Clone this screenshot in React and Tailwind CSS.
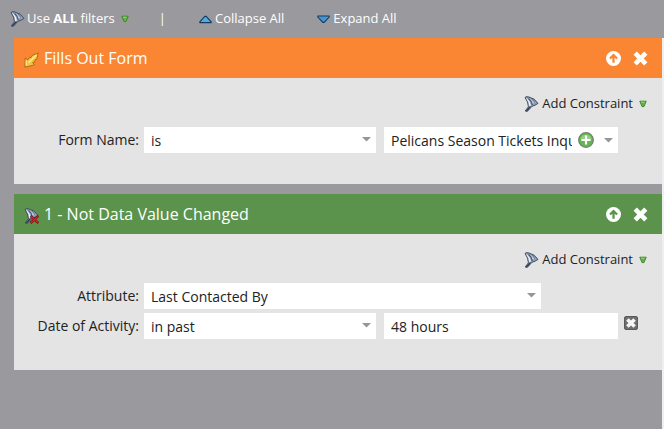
import { useState } from "react";

function FunnelIcon({ removed }) {
  return (
    <svg width="15" height="16" viewBox="0 0 15 16" className="shrink-0" aria-hidden="true">
      <path d="M1 1.6 Q1.8 0.2 4.4 0.8 Q11 2.2 14 7.4 Q11.4 9.4 7.8 10.4 L3.4 15.4 L1.2 15 L4.4 10.8 Q4.4 6 1 1.6 Z" fill="#8b9ab2" stroke="#3a465c" strokeWidth="0.9" strokeLinejoin="round" />
      <path d="M4.2 2 Q9.6 3.4 12.4 7.2 Q10 7.8 8.6 7.4 Q7.2 4.2 4.2 2 Z" fill="#b9c7d9" />
      <path d="M2.6 2.4 Q5.8 5 6.6 9.2 L5.6 10.6 Q5.6 6 2.6 2.4 Z" fill="#f6f9fc" stroke="#f6f9fc" strokeWidth="0.6" />
      <path d="M4.6 2.4 Q7.8 5 8.2 9" fill="none" stroke="#44536d" strokeWidth="1.1" />
      <path d="M7.4 2.8 Q10.4 4.8 11.2 7.6" fill="none" stroke="#52627d" strokeWidth="0.8" />
      <path d="M2.4 14.8 Q5 12.4 6.4 10.4" fill="none" stroke="#2c3546" strokeWidth="1.1" />
      {removed && (
        <>
          <path d="M6.6 8 L14.4 15 M14.4 8 L6.6 15" stroke="#7c1010" strokeWidth="2.4" />
          <path d="M7 8.4 L14 14.6 M14 8.4 L7 14.6" stroke="#d92828" strokeWidth="1.2" />
        </>
      )}
    </svg>
  );
}

function FormArrowIcon() {
  return (
    <svg width="15" height="16" viewBox="0 0 15 16" className="shrink-0" aria-hidden="true">
      <path d="M14.2 1 L13 6.8 L11 7.8 L11 9.4 L8.6 10.6 L10.6 12.8 L1 15.2 L1.2 6 L3.8 8 L5.4 5.4 L7 5.6 L8.2 3.4 Z" fill="#f6c340" stroke="#a8690f" strokeWidth="0.9" strokeLinejoin="round" />
      <path d="M12.4 3 L4.6 10.6 M2.2 8.4 L2.2 13.6" fill="none" stroke="#fff0a0" strokeWidth="1.1" />
    </svg>
  );
}

function GreenArrow() {
  return (
    <svg width="8" height="8" viewBox="0 0 8 8" className="shrink-0" aria-hidden="true">
      <path d="M0.8 1.2 H7.2 L5 6.6 H3 Z" fill="#62b345" stroke="#3a8228" strokeWidth="0.9" strokeLinejoin="round" />
      <path d="M2 2.2 H5.6" stroke="#a3dd8a" strokeWidth="0.8" />
    </svg>
  );
}

function BlueTriangle({ down }) {
  return (
    <svg width="13" height="9" viewBox="0 0 13 9" className="shrink-0" aria-hidden="true">
      {down ? (
        <path d="M0.8 1 H12.2 V2 L7.2 7.4 H5.8 L0.8 2 Z" fill="#4794cf" stroke="#163a5c" strokeWidth="1.1" strokeLinejoin="round" />
      ) : (
        <path d="M0.8 7.6 H12.2 V6.8 L7.2 1.4 H5.8 L0.8 6.8 Z" fill="#55a8e0" stroke="#163a5c" strokeWidth="1.1" strokeLinejoin="round" />
      )}
    </svg>
  );
}

function Caret() {
  return (
    <svg width="9" height="5" viewBox="0 0 9 5" className="shrink-0" aria-hidden="true">
      <path d="M0 0 H9 L4.5 4.6 Z" fill="#969696" />
    </svg>
  );
}

function AddConstraint() {
  return (
    <div className="flex justify-end pr-[15px]">
      <button className="flex h-5 cursor-pointer items-center text-[13px] text-[#222]">
        <FunnelIcon />
        <span className="ml-[3px]">Add Constraint</span>
        <span className="ml-[6px]"><GreenArrow /></span>
      </button>
    </div>
  );
}

function Field({ id, label, children }) {
  return (
    <div className="flex items-center pr-[44px]">
      <label htmlFor={id} className="w-[125px] shrink-0 text-right text-sm">
        {label}
      </label>
      <div className="relative ml-[5px] grid min-w-0 flex-1 grid-cols-[116fr_117fr] gap-2">{children}</div>
    </div>
  );
}

function Select({ id, value, className }) {
  return (
    <div className={`relative min-w-0 ${className || ""}`}>
      <select
        id={id}
        defaultValue={value}
        className="block h-[26px] w-full appearance-none bg-white pl-[7px] pr-5 pt-[2px] text-sm leading-6 outline-none"
      >
        <option>{value}</option>
      </select>
      <span className="pointer-events-none absolute right-[5px] top-[10px]"><Caret /></span>
    </div>
  );
}

function FilterCard({ title, icon, color, arrowColor, children }) {
  const [open, setOpen] = useState(true);

  return (
    <section className="bg-[#e4e4e4]">
      <header className={`flex h-10 items-center pl-[10px] pr-[14px] text-white ${color}`}>
        <span className="pt-1">{icon}</span>
        <h2 className="ml-[5px] flex-1 text-base">{title}</h2>
        <button onClick={() => setOpen(!open)} aria-label="Collapse filter" className="cursor-pointer">
          <svg width="15" height="15" viewBox="0 0 16 16" aria-hidden="true">
            <circle cx="8" cy="8" r="8" fill="white" />
            <path d="M8 2.7 L12.6 7.3 L11 8.9 L9.2 7.1 V12.6 H6.8 V7.1 L5 8.9 L3.4 7.3 Z" className={arrowColor} />
          </svg>
        </button>
        <button aria-label="Remove filter" className="ml-3 cursor-pointer">
          <svg width="15" height="15" viewBox="0 0 15 15" aria-hidden="true">
            <path d="M2.2 2.2 L12.8 12.8 M12.8 2.2 L2.2 12.8" stroke="white" strokeWidth="4.6" />
          </svg>
        </button>
      </header>
      {open && (
        <div className="pb-[31px] pt-4">
          <AddConstraint />
          <div className="mt-[13px] flex flex-col gap-1">{children}</div>
        </div>
      )}
    </section>
  );
}

export default function App() {
  const [form, setForm] = useState("Pelicans Season Tickets Inquiry");
  const [hours, setHours] = useState("48 hours");

  return (
    <div className="flex min-h-screen flex-col bg-[#9a999d] font-['Open_Sans',sans-serif] text-[#222]">
      {/* Toolbar */}
      <div className="flex h-[38px] items-center pl-[10px] text-[13px] text-white">
        <button className="flex cursor-pointer items-center">
          <FunnelIcon />
          <span className="ml-[2px]">Use <b>ALL</b> filters</span>
          <span className="ml-[6px]"><GreenArrow /></span>
        </button>
        <span className="ml-[30px]">|</span>
        <button className="ml-[33px] flex cursor-pointer items-center">
          <BlueTriangle />
          <span className="ml-[3px]">Collapse All</span>
        </button>
        <button className="ml-[33px] flex cursor-pointer items-center">
          <BlueTriangle down />
          <span className="ml-[3px]">Expand All</span>
        </button>
      </div>

      <main className="flex flex-1 flex-col gap-[10px] border-r-2 border-[#efefef] pl-[14px]">
        <FilterCard title="Fills Out Form" icon={<FormArrowIcon />} color="bg-[#fa8633]" arrowColor="fill-[#fa8633]">
          <Field id="form-op" label="Form Name:">
            <Select id="form-op" value="is" />
            <div className="flex h-[26px] min-w-0 items-center bg-white pl-[7px] pr-[5px]">
              <input
                aria-label="Form"
                value={form}
                onChange={(e) => setForm(e.target.value)}
                className="h-[26px] min-w-0 flex-1 text-sm outline-none"
              />
              <button aria-label="Add value" className="ml-[6px] mr-[10px] shrink-0 cursor-pointer">
                <svg width="16" height="16" viewBox="0 0 16 16" aria-hidden="true">
                  <circle cx="8" cy="8" r="7.3" fill="#65b653" stroke="#71836d" strokeWidth="1.3" />
                  <path d="M2.4 7 A5.8 5.8 0 0 1 13.6 7 Z" fill="#93cf80" />
                  <path d="M8 3.4 V12.6 M3.4 8 H12.6" stroke="white" strokeWidth="2.2" />
                </svg>
              </button>
              <Caret />
            </div>
          </Field>
        </FilterCard>

        <FilterCard title="1 - Not Data Value Changed" icon={<FunnelIcon removed />} color="bg-[#5b934c]" arrowColor="fill-[#5b934c]">
          <Field id="attribute" label="Attribute:">
            <Select id="attribute" value="Last Contacted By" className="col-span-2 max-w-[397px]" />
          </Field>
          <Field id="activity-op" label="Date of Activity:">
            <Select id="activity-op" value="in past" />
            <input
              aria-label="Time frame"
              value={hours}
              onChange={(e) => setHours(e.target.value)}
              className="h-[26px] min-w-0 bg-white px-[7px] text-sm outline-none"
            />
            <button aria-label="Remove constraint" className="absolute left-full top-[3px] ml-[6px] cursor-pointer">
              <svg width="14" height="14" viewBox="0 0 14 14" aria-hidden="true">
                <rect x="0.5" y="0.5" width="13" height="13" rx="1.5" fill="#6e6e6e" stroke="#5a5a5a" />
                <path d="M3.4 3.4 L10.6 10.6 M10.6 3.4 L3.4 10.6" stroke="#f6f6f6" strokeWidth="3.6" />
              </svg>
            </button>
          </Field>
        </FilterCard>
      </main>
    </div>
  );
}
